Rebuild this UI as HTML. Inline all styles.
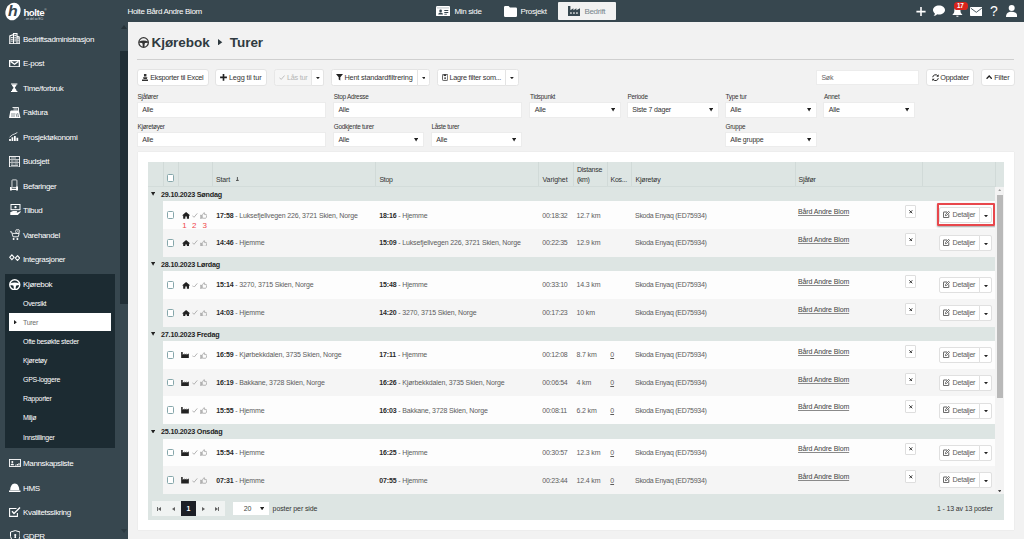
<!DOCTYPE html><html lang="no"><head><meta charset="utf-8"><title>Kjørebok - Turer</title><style>
*{box-sizing:border-box;margin:0;padding:0}
html,body{width:1024px;height:539px;overflow:hidden;background:#f2f2f2;font-family:"Liberation Sans",sans-serif;color:#333}
.abs{position:absolute}
.t{position:absolute;white-space:nowrap;line-height:1}
#top{position:absolute;left:0;top:0;width:1024px;height:22px;background:#37474f}
#side{position:absolute;left:0;top:22px;width:128px;height:517px;background:#37474f;overflow:hidden}
.si{position:absolute;left:23px;color:#fff;font-size:8px;letter-spacing:-0.35px;white-space:nowrap;line-height:10px;height:10px}
.ss{position:absolute;left:23px;color:#fff;font-size:7px;letter-spacing:-0.3px;white-space:nowrap;line-height:10px;height:10px}
.btn{position:absolute;top:68.7px;height:17px;background:#fff;border:1px solid #e4e4e4;border-radius:3px;font-size:7.3px;line-height:16.6px;padding-left:0.6px;white-space:nowrap;color:#333}
.btn svg{margin:0.7px 0 0 0.6px}
.lbl{position:absolute;font-size:6.4px;letter-spacing:-0.26px;line-height:8px;white-space:nowrap;color:#333}
.inp{position:absolute;height:15.6px;background:#fff;border:1px solid #ececec;font-size:7px;letter-spacing:-0.19px;line-height:14.4px;padding-left:4.4px;margin:-0.5px 0 0 -0.7px;white-space:nowrap;color:#333}
.inp .car{position:absolute;right:4.6px;top:5.4px;width:4.2px;height:3.4px}
#panel{position:absolute;left:138px;top:151.8px;width:875.7px;height:378.4px;background:#fff;box-shadow:0 0 0.8px rgba(0,0,0,.18)}
#tbl{position:absolute;left:148px;top:161.8px;width:856px;height:358.2px;background:#dde5e3}
.th{position:absolute;font-size:7px;letter-spacing:-0.25px;line-height:9px;white-space:nowrap;color:#333}
.vd{position:absolute;top:0;width:1px;height:25px;background:#d1dad8}
  .grp{position:absolute;left:0;width:847px;height:14.5px;background:#dde5e3;font-size:7.2px;font-weight:bold;letter-spacing:-0.2px;line-height:15.1px;white-space:nowrap;color:#222}
.row{position:absolute;left:15px;width:832px;height:27.8px;font-size:7px;letter-spacing:-0.14px;white-space:nowrap;color:#5c5c5c}
.row .c{position:absolute;top:9.35px;line-height:9px}
.row b{color:#2a2a2a;letter-spacing:-0.15px}
.cb{position:absolute;width:7.2px;height:7.8px;border:1.1px solid #86a7ab;background:#fff;border-radius:1.5px}
.xb{position:absolute;width:10.8px;height:12.6px;border:1px solid #dedede;background:#fff;border-radius:1px}
.db{position:absolute;height:16px;background:#fff;border:1px solid #e0e0e0;border-radius:2px;font-size:7.2px;letter-spacing:-0.25px;line-height:14.2px}
</style></head><body>
<div id="top">
<svg class="abs" style="left:3.5px;top:2px" width="18" height="19" viewBox="0 0 18 19"><ellipse cx="9" cy="9.5" rx="7.3" ry="9" transform="rotate(24 9 9.5)" fill="#fff"/></svg>
<div class="t" style="left:8px;top:3.3px;font-size:15.5px;font-weight:bold;font-style:italic;color:#37474f;transform:scaleX(1.02);transform-origin:left top">h</div>
<div class="t" style="left:23.4px;top:8.1px;font-size:9.7px;font-weight:bold;color:#fff;letter-spacing:-0.45px">holte</div>
<div class="t" style="left:44.2px;top:8.6px;font-size:3.2px;color:#cfd8dc">®</div>
<div class="t" style="left:24.2px;top:17.7px;font-size:2.9px;color:#cfd8dc;letter-spacing:0">- en del av ECi</div>
<div class="t" style="left:127.5px;top:8.4px;font-size:8px;color:#fff;letter-spacing:-0.33px">Holte Bård Andre Blom</div>
<svg class="abs" style="left:435.8px;top:5.6px" width="14.2" height="10.4" viewBox="0 0 14.2 10.4"><rect x="0" y="0" width="14.2" height="10.4" rx="1.4" fill="#fff"/><rect x="1" y="1.6" width="12.2" height="0.7" fill="#9aa5aa"/><circle cx="4.6" cy="4.9" r="1.35" fill="#37474f"/><path d="M2.2 8.4Q2.2 6.5 4.6 6.5Q7 6.5 7 8.4Z" fill="#37474f"/><rect x="8.3" y="4" width="4" height="1" fill="#37474f"/><rect x="8.3" y="6" width="4" height="1" fill="#37474f"/><rect x="8.3" y="7.8" width="2.6" height="0.8" fill="#37474f"/></svg>
<div class="t" style="left:454.5px;top:8px;font-size:8px;color:#fff;letter-spacing:-0.35px">Min side</div>
<svg class="abs" style="left:503.7px;top:5.5px" width="13" height="11" viewBox="0 0 13 11"><path d="M0 1.2 Q0 0 1.2 0 L4.6 0 L6 1.6 L11.8 1.6 Q13 1.6 13 2.8 L13 9.8 Q13 11 11.8 11 L1.2 11 Q0 11 0 9.8Z" fill="#fff"/></svg>
<div class="t" style="left:520.5px;top:8px;font-size:8px;color:#fff;letter-spacing:-0.35px">Prosjekt</div>
<div class="abs" style="left:558px;top:2px;width:58.3px;height:18px;background:#f2f2f2;border-radius:1px"></div>
<svg class="abs" style="left:568px;top:6px" width="12" height="10" viewBox="0 0 12 10"><path d="M0 0 L2.4 0 L2.4 4.2 L5.4 2.2 L5.4 4.2 L8.4 2.2 L8.4 4.2 L12 2.2 L12 10 L0 10Z" fill="#37474f"/><rect x="2.2" y="6.3" width="1.5" height="1.5" fill="#f2f2f2"/><rect x="5.2" y="6.3" width="1.5" height="1.5" fill="#f2f2f2"/><rect x="8.2" y="6.3" width="1.5" height="1.5" fill="#f2f2f2"/></svg>
<div class="t" style="left:584.5px;top:8px;font-size:8px;color:#78868c;letter-spacing:-0.35px">Bedrift</div>
<svg class="abs" style="left:916px;top:6.6px" width="10" height="9.2" viewBox="0 0 10 10"><path d="M4.15 0h1.7v4.1H10v1.8H5.85V10H4.15V5.9H0V4.1h4.15z" fill="#fff"/></svg>
<svg class="abs" style="left:933px;top:5.2px" width="12" height="12" viewBox="0 0 12 12"><path d="M6 0.5 C9.3 0.5 12 2.5 12 5 C12 7.5 9.3 9.5 6 9.5 C5.3 9.5 4.7 9.4 4.1 9.3 C3.2 10.2 2 10.9 0.6 11 C1.3 10.3 1.8 9.4 1.9 8.4 C0.7 7.5 0 6.3 0 5 C0 2.5 2.7 0.5 6 0.5Z" fill="#fff"/></svg>
<svg class="abs" style="left:952.2px;top:5.8px" width="10.8" height="11.4" viewBox="0 0 11 13"><path d="M5.5 0.5 C7.8 0.5 9 2.5 9 5 C9 7.5 9.8 8.6 11 9.6 L11 10.4 L0 10.4 L0 9.6 C1.2 8.6 2 7.5 2 5 C2 2.5 3.2 0.5 5.5 0.5Z M4.2 11 L6.8 11 C6.8 11.9 6.2 12.4 5.5 12.4 C4.8 12.4 4.2 11.9 4.2 11Z" fill="#fff"/></svg>
<div class="abs" style="left:953.7px;top:2.4px;width:14.4px;height:7.2px;border-radius:3.6px;background:#d9241c"></div>
<div class="t" style="left:957px;top:3px;font-size:6.3px;font-weight:bold;color:#fff;letter-spacing:-0.2px">17</div>
<svg class="abs" style="left:969.7px;top:6.7px" width="12.6" height="9" viewBox="0 0 12.6 9"><rect width="12.6" height="9" rx="0.8" fill="#fff"/><path d="M0.8 1.2 L6.3 5.3 L11.8 1.2" fill="none" stroke="#37474f" stroke-width="0.9"/></svg>
<div class="t" style="left:990px;top:3.8px;font-size:14px;color:#fff">?</div>
<svg class="abs" style="left:1006px;top:5px" width="11.4" height="12" viewBox="0 0 11.4 12"><circle cx="5.7" cy="3" r="3" fill="#fff"/><path d="M0 12 C0 8.5 2 6.8 5.7 6.8 C9.4 6.8 11.4 8.5 11.4 12Z" fill="#fff"/></svg>
</div>
<div id="side">
<div class="abs" style="left:120px;top:29px;width:8px;height:253px;background:#212f36"></div>
<div class="abs" style="left:120.5px;top:2.5px;width:0;height:0;border-left:3.5px solid transparent;border-right:3.5px solid transparent;border-bottom:4px solid #263238"></div>
<div class="abs" style="left:120.5px;top:507px;width:0;height:0;border-left:3.5px solid transparent;border-right:3.5px solid transparent;border-top:4px solid #2c3a41"></div>
<div class="abs" style="left:5px;top:251.7px;width:109.5px;height:174px;background:#1c2b32"></div>
<div class="abs" style="left:8.8px;top:291.3px;width:102px;height:17.4px;background:#fff"></div>
<svg class="abs" style="left:13.8px;top:297.8px" width="2.8" height="4.6" viewBox="0 0 2.8 4.6"><polygon points="0,0 2.8,2.3 0,4.6" fill="#222"/></svg>
<svg class="abs" style="left:9px;top:11px" width="11" height="11" viewBox="0 0 11 11"><path d="M0.8 10.5V3L4.5 1.6V10.5M4.5 10.5V0.6H8V10.5M8 3.2L10.2 4V10.5" fill="none" stroke="#fff" stroke-width="1.1"/><path d="M0 10.6H11" stroke="#fff" stroke-width="0.9"/><path d="M1.8 4.5h2M1.8 6.3h2M1.8 8.1h2M5.3 2.5h2M5.3 4.3h2M5.3 6.1h2M5.3 7.9h2M8.6 5.5h1M8.6 7.3h1" stroke="#fff" stroke-width="0.9"/></svg>
<div class="si" style="top:12.6px">Bedriftsadministrasjon</div>
<svg class="abs" style="left:9px;top:37.5px" width="11" height="7.5" viewBox="0 0 11 7.5"><rect x="0.65" y="0.65" width="9.7" height="6.2" fill="none" stroke="#fff" stroke-width="1.3"/><path d="M1.6 1.4L5.5 4.2L9.4 1.4" fill="none" stroke="#fff" stroke-width="1.3"/></svg>
<div class="si" style="top:37.1px">E-post</div>
<svg class="abs" style="left:11.4px;top:60.7px" width="6.4" height="9.6" viewBox="0 0 7.5 10"><path d="M0 0h7.5v1.2H0zM0 8.8h7.5V10H0z" fill="#fff"/><path d="M1 1.2H6.5C6.5 3.4 4.5 4.2 4.5 5C4.5 5.8 6.5 6.6 6.5 8.8H1C1 6.6 3 5.8 3 5C3 4.2 1 3.4 1 1.2Z" fill="#fff"/></svg>
<div class="si" style="top:61.6px">Time/forbruk</div>
<svg class="abs" style="left:9px;top:84.5px" width="11.5" height="11" viewBox="0 0 11.5 11"><path d="M3.5 0.5H9.5V4" fill="none" stroke="#fff" stroke-width="0.9"/><path d="M0 11L1.2 4.5Q1.4 3.6 2.3 3.6H9Q9.9 3.6 10.1 4.5L11.5 11Z" fill="#fff"/><path d="M4.5 1.8h4M4.5 3h4" stroke="#fff" stroke-width="0.6"/><path d="M3 6v4M5 6v4M7 6.5l1 3.5M8.6 6l1 4" stroke="#37474f" stroke-width="0.6"/></svg>
<div class="si" style="top:86.1px">Faktura</div>
<svg class="abs" style="left:9.3px;top:109.6px" width="9.4" height="9.6" viewBox="0 0 10.5 11"><path d="M0 11V8h2v3zM2.8 11V6h2v5zM5.6 11V4.5h2V11zM8.4 11V6.5h2V11z" fill="#fff"/><path d="M0.5 6L3.8 3.2L6.5 2.2L9.5 0.5" fill="none" stroke="#fff" stroke-width="0.9"/></svg>
<div class="si" style="top:110.6px">Prosjektøkonomi</div>
<svg class="abs" style="left:9px;top:133.5px" width="11" height="11.5" viewBox="0 0 11 11.5"><rect x="0.5" y="0.5" width="10" height="10.5" fill="none" stroke="#fff" stroke-width="0.9"/><path d="M0.5 3.6h10M0.5 6.4h10M2 2h5M2 5h2.5M5.5 5h3.5M2 8h2.5M5.5 8h3.5M2 9.5h7" stroke="#fff" stroke-width="0.7"/></svg>
<div class="si" style="top:135.1px">Budsjett</div>
<svg class="abs" style="left:10.3px;top:156.7px" width="8" height="12" viewBox="0 0 9 12.5"><rect x="2.2" y="0.5" width="5.6" height="8.5" rx="0.8" fill="none" stroke="#fff" stroke-width="0.9"/><path d="M0 8.5h2v4H0zM2 10.5h5.5V12H2zM6.8 8h2.2v4.5H6.8z" fill="#fff"/></svg>
<div class="si" style="top:159.6px">Befaringer</div>
<svg class="abs" style="left:9.5px;top:182.0px" width="11" height="12" viewBox="0 0 11 12"><rect x="1" y="0.5" width="9" height="5.2" fill="none" stroke="#fff" stroke-width="1"/><circle cx="5.5" cy="3.1" r="1.2" fill="#fff"/><path d="M0.3 8.2L3 7h3.5q1 0.2 0.4 1.2H5l2.8 0.2L10.3 7.2q0.9 0 0.4 0.9L7.8 11H0.3z" fill="#fff"/></svg>
<div class="si" style="top:184.1px">Tilbud</div>
<svg class="abs" style="left:9.5px;top:206.5px" width="11" height="12" viewBox="0 0 11 12"><path d="M0 2.8h1.6l1.4 5h5.2l1-3.4H2.4" fill="none" stroke="#fff" stroke-width="0.9"/><circle cx="3.6" cy="10" r="1" fill="#fff"/><circle cx="7.4" cy="10" r="1" fill="#fff"/><circle cx="7.6" cy="2.4" r="2" fill="none" stroke="#fff" stroke-width="0.8"/><path d="M7.6 1.3v1.3h1" stroke="#fff" stroke-width="0.6" fill="none"/></svg>
<div class="si" style="top:208.6px">Varehandel</div>
<svg class="abs" style="left:9px;top:231.9px" width="11.4" height="7.4" viewBox="0 0 11.4 7.4"><path d="M2.9 0.9L5.1 3.3L2.9 5.7L0.7 3.3Z" fill="none" stroke="#fff" stroke-width="1.1"/><path d="M8.5 1.7L10.7 4.1L8.5 6.5L6.3 4.1Z" fill="none" stroke="#fff" stroke-width="1.1"/></svg>
<div class="si" style="top:233.1px">Integrasjoner</div>
<svg class="abs" style="left:9px;top:256.5px" width="11.5" height="11.5" viewBox="0 0 11.5 11.5"><circle cx="5.75" cy="5.75" r="5" fill="none" stroke="#fff" stroke-width="1.4"/><path d="M1 4.6Q5.75 2.6 10.5 4.6L10.4 6L7.2 6.4Q6.6 7.6 6.7 10.4H4.8Q4.9 7.6 4.3 6.4L1.1 6Z" fill="#fff"/></svg>
<div class="si" style="top:258.1px">Kjørebok</div>
<svg class="abs" style="left:9px;top:437.0px" width="12" height="8" viewBox="0 0 12 8"><rect x="0.5" y="0.5" width="11" height="7" fill="none" stroke="#fff" stroke-width="0.9"/><circle cx="3.3" cy="3" r="1" fill="#fff"/><path d="M1.6 6.2Q1.6 4.4 3.3 4.4Q5 4.4 5 6.2Z" fill="#fff"/><path d="M6 5.8h1.4v0.8H6zM7.8 5h1.2v1.6H7.8zM9.4 4.2h1.2v2.4H9.4z" fill="#fff"/></svg>
<div class="si" style="top:437.1px">Mannskapsliste</div>
<svg class="abs" style="left:9px;top:460.5px" width="11.5" height="9.5" viewBox="0 0 11.5 9.5"><path d="M1.2 7.2C1.2 3.5 3 0.6 5.75 0.6C8.5 0.6 10.3 3.5 10.3 7.2Z" fill="#fff"/><path d="M0 7.4h11.5v1.6Q5.75 9.8 0 9z" fill="#fff"/></svg>
<div class="si" style="top:461.6px">HMS</div>
<svg class="abs" style="left:9px;top:485.0px" width="12" height="10" viewBox="0 0 12 10"><path d="M7.5 1.5H0.6V9.4H8.4V6" fill="none" stroke="#fff" stroke-width="1.1"/><path d="M3 4.2L5 6.4L11 0.6" fill="none" stroke="#fff" stroke-width="1.4"/></svg>
<div class="si" style="top:486.1px">Kvalitetssikring</div>
<svg class="abs" style="left:9.5px;top:508.0px" width="10.5" height="12" viewBox="0 0 10.5 12"><path d="M5.25 0.6L10 2v4.5Q10 10 5.25 11.6Q0.5 10 0.5 6.5V2Z" fill="none" stroke="#fff" stroke-width="1"/><circle cx="5.25" cy="5" r="1.1" fill="#fff"/><path d="M4.7 5.5h1.1l0.4 2.6H4.3z" fill="#fff"/></svg>
<div class="si" style="top:510.1px">GDPR</div>
<div class="ss" style="top:277.0px;color:#fff">Oversikt</div>
<div class="ss" style="top:296.0px;color:#6e6e6e">Turer</div>
<div class="ss" style="top:315.0px;color:#fff">Ofte besøkte steder</div>
<div class="ss" style="top:334.0px;color:#fff">Kjøretøy</div>
<div class="ss" style="top:353.0px;color:#fff">GPS-loggere</div>
<div class="ss" style="top:372.0px;color:#fff">Rapporter</div>
<div class="ss" style="top:391.3px;color:#fff">Miljø</div>
<div class="ss" style="top:410.5px;color:#fff">Innstillinger</div>
</div>
<svg class="abs" style="left:137.6px;top:36.6px" width="11.2" height="11" viewBox="0 0 11.5 11.5"><circle cx="5.75" cy="5.75" r="5" fill="none" stroke="#333" stroke-width="1.3"/><path d="M1 4.6Q5.75 2.6 10.5 4.6L10.4 6L7.2 6.4Q6.6 7.6 6.7 10.4H4.8Q4.9 7.6 4.3 6.4L1.1 6Z" fill="#333"/></svg>
<div class="t" style="left:151.5px;top:35.5px;font-size:13.5px;font-weight:bold;color:#2f3a40;letter-spacing:-0.05px">Kjørebok</div>
<svg class="abs" style="left:218.4px;top:38.8px" width="4.3" height="6.4" viewBox="0 0 4.3 6.4"><polygon points="0,0 4.3,3.2 0,6.4" fill="#2f3a40"/></svg>
<div class="t" style="left:229.8px;top:35.5px;font-size:13.5px;font-weight:bold;color:#2f3a40;letter-spacing:-0.05px">Turer</div>
<div class="abs" style="left:137px;top:59px;width:877px;height:1px;background:#cfcfcf"></div>
<div class="btn" style="left:136.8px;width:71.8px;"><svg class="abs" style="left:3.6px;top:3.2px" width="6.4" height="7.4" viewBox="0 0 6.5 7.5"><path d="M2 0h2.5v2.6H2zM1 3.2h4.5l-0.6 2H1.6zM0 5.6h6.5v1.9H0z" fill="#333"/></svg><span style="position:absolute;left:12.4px;top:0;letter-spacing:-0.269px">Eksporter til Excel</span></div>
<div class="btn" style="left:215.3px;width:51.7px;"><svg class="abs" style="left:3px;top:3.6px" width="7" height="6.8" viewBox="0 0 10 10"><path d="M3.8 0h2.4v3.8H10v2.4H6.2V10H3.8V6.2H0V3.8h3.8z" fill="#222"/></svg><span style="position:absolute;left:12.6px;top:0;letter-spacing:-0.124px">Legg til tur</span></div>
<div class="btn" style="left:273.8px;width:38.7px;background:#f6f6f6;border-color:#e7e7e7;border-radius:2.5px 0 0 2.5px"><svg class="abs" style="left:3.6px;top:4.2px" width="6" height="5" viewBox="0 0 6 5"><path d="M0.4 2.6L2.2 4.4L5.6 0.5" fill="none" stroke="#b0b0b0" stroke-width="0.8"/></svg><span style="position:absolute;left:12.3px;top:0;letter-spacing:-0.302px;color:#b5b5b5">Lås tur</span></div>
<div class="btn" style="left:310.8px;width:13.4px;border-radius:0 2.5px 2.5px 0;border-left-color:#e7e7e7"><svg class="abs" style="left:3.6px;top:6.4px" width="3.8" height="2.2" viewBox="0 0 3.8 2.2"><polygon points="0,0 3.8,0 1.9,2.2" fill="#222"/></svg></div>
<div class="btn" style="left:331.0px;width:87.2px;border-radius:2.5px 0 0 2.5px"><svg class="abs" style="left:3.4px;top:3.7px" width="7" height="6.6" viewBox="0 0 7 6.6"><path d="M0 0h7L4.3 3.2V6.6L2.7 5.6V3.2Z" fill="#222"/></svg><span style="position:absolute;left:12.4px;top:0;letter-spacing:-0.157px">Hent standardfiltrering</span></div>
<div class="btn" style="left:416.5px;width:13.5px;border-radius:0 2.5px 2.5px 0"><svg class="abs" style="left:3.6px;top:6.4px" width="3.8" height="2.2" viewBox="0 0 3.8 2.2"><polygon points="0,0 3.8,0 1.9,2.2" fill="#222"/></svg></div>
<div class="btn" style="left:437.2px;width:69.2px;border-radius:2.5px 0 0 2.5px"><svg class="abs" style="left:3.2px;top:3.4px" width="6.2" height="6.8" viewBox="0 0 6 6.6"><rect x="0.4" y="0.4" width="5.2" height="5.8" rx="0.8" fill="none" stroke="#333" stroke-width="0.8"/><rect x="1.6" y="0.4" width="2.4" height="1.6" fill="#333"/><circle cx="3" cy="4" r="0.9" fill="#333"/></svg><span style="position:absolute;left:11.2px;top:0;letter-spacing:-0.242px">Lagre filter som...</span></div>
<div class="btn" style="left:504.7px;width:14.0px;border-radius:0 2.5px 2.5px 0"><svg class="abs" style="left:3.6px;top:6.4px" width="3.8" height="2.2" viewBox="0 0 3.8 2.2"><polygon points="0,0 3.8,0 1.9,2.2" fill="#222"/></svg></div>
<div class="inp" style="left:816.7px;top:70.4px;width:102.6px;color:#666">Søk</div>
<div class="btn" style="left:926.2px;width:48.0px;"><svg class="abs" style="left:4px;top:3.3px" width="7" height="7.4" viewBox="0 0 7 7.4"><path d="M0.7 3.2A2.9 2.9 0 0 1 5.8 1.8" fill="none" stroke="#222" stroke-width="1"/><path d="M6.7 0.3V2.7H4.4Z" fill="#222"/><path d="M6.3 4.2A2.9 2.9 0 0 1 1.2 5.6" fill="none" stroke="#222" stroke-width="1"/><path d="M0.3 7.1V4.7H2.6Z" fill="#222"/></svg><span style="position:absolute;left:13px;top:0;letter-spacing:-0.205px">Oppdater</span></div>
<div class="btn" style="left:980.5px;width:34.0px;"><svg class="abs" style="left:4px;top:4.6px" width="6.4" height="4.4" viewBox="0 0 6.4 4.4"><path d="M0.6 3.8L3.2 1L5.8 3.8" fill="none" stroke="#222" stroke-width="1.3"/></svg><span style="position:absolute;left:12.8px;top:0;letter-spacing:-0.17px">Filter</span></div>
<div class="lbl" style="left:137.5px;top:93.0px">Sjåfører</div>
<div class="inp" style="left:137.5px;top:102.5px;width:188.7px">Alle</div>
<div class="lbl" style="left:333.7px;top:93.0px">Stop Adresse</div>
<div class="inp" style="left:333.7px;top:102.5px;width:189.0px">Alle</div>
<div class="lbl" style="left:530px;top:93.0px">Tidspunkt</div>
<div class="inp" style="left:530px;top:102.5px;width:91.2px">Alle<svg class="car" viewBox="0 0 4.2 3.4"><polygon points="0,0 4.2,0 2.1,3.4" fill="#222"/></svg></div>
<div class="lbl" style="left:627.5px;top:93.0px">Periode</div>
<div class="inp" style="left:627.5px;top:102.5px;width:91.7px">Siste 7 dager<svg class="car" viewBox="0 0 4.2 3.4"><polygon points="0,0 4.2,0 2.1,3.4" fill="#222"/></svg></div>
<div class="lbl" style="left:725.5px;top:93.0px">Type tur</div>
<div class="inp" style="left:725.5px;top:102.5px;width:91.7px">Alle<svg class="car" viewBox="0 0 4.2 3.4"><polygon points="0,0 4.2,0 2.1,3.4" fill="#222"/></svg></div>
<div class="lbl" style="left:824px;top:93.0px">Annet</div>
<div class="inp" style="left:824px;top:102.5px;width:91.7px">Alle<svg class="car" viewBox="0 0 4.2 3.4"><polygon points="0,0 4.2,0 2.1,3.4" fill="#222"/></svg></div>
<div class="lbl" style="left:137.5px;top:122.80000000000001px">Kjøretøyer</div>
<div class="inp" style="left:137.5px;top:132.3px;width:188.7px">Alle</div>
<div class="lbl" style="left:333.7px;top:122.80000000000001px">Godkjente turer</div>
<div class="inp" style="left:333.7px;top:132.3px;width:91.0px">Alle<svg class="car" viewBox="0 0 4.2 3.4"><polygon points="0,0 4.2,0 2.1,3.4" fill="#222"/></svg></div>
<div class="lbl" style="left:431.5px;top:122.80000000000001px">Låste turer</div>
<div class="inp" style="left:431.5px;top:132.3px;width:91.2px">Alle<svg class="car" viewBox="0 0 4.2 3.4"><polygon points="0,0 4.2,0 2.1,3.4" fill="#222"/></svg></div>
<div class="lbl" style="left:725.5px;top:122.80000000000001px">Gruppe</div>
<div class="inp" style="left:725.5px;top:132.3px;width:91.7px">Alle gruppe<svg class="car" viewBox="0 0 4.2 3.4"><polygon points="0,0 4.2,0 2.1,3.4" fill="#222"/></svg></div>
<div id="panel"></div>
<div id="tbl">
<div class="vd" style="left:15px"></div>
<div class="vd" style="left:30px"></div>
<div class="vd" style="left:64.19999999999999px"></div>
<div class="vd" style="left:227.3px"></div>
<div class="vd" style="left:389.79999999999995px"></div>
<div class="vd" style="left:425px"></div>
<div class="vd" style="left:459px"></div>
<div class="vd" style="left:483px"></div>
<div class="vd" style="left:646.7px"></div>
<div class="vd" style="left:774.2px"></div>
<div class="vd" style="left:847px"></div>
<div class="abs" style="left:0;top:24.6px;width:847px;height:1px;background:#d3dcda"></div>
<div class="cb" style="left:19px;top:12.6px"></div>
<div class="th" style="left:68px;top:13px;letter-spacing:-0.157px">Start</div>
<svg class="abs" style="left:88.2px;top:14.8px" width="2.8" height="4.8" viewBox="0 0 2.8 4.8"><path d="M1.4 0V4.3M0 2.8L1.4 4.5L2.8 2.8" fill="none" stroke="#333" stroke-width="0.8"/></svg>
<div class="th" style="left:231.5px;top:13px;letter-spacing:-0.35px">Stop</div>
<div class="th" style="left:394.5px;top:13px;letter-spacing:-0.069px">Varighet</div>
<div class="th" style="left:429px;top:3.5px;letter-spacing:-0.279px">Distanse</div>
<div class="th" style="left:429px;top:13px;letter-spacing:-0.373px">(km)</div>
<div class="th" style="left:462.5px;top:13px;letter-spacing:-0.233px">Kos...</div>
<div class="th" style="left:487.5px;top:13px;letter-spacing:-0.181px">Kjøretøy</div>
<div class="th" style="left:650.5px;top:13px;letter-spacing:-0.278px">Sjåfør</div>
<div class="grp" style="top:25.00px"><svg class="abs" style="left:3.3px;top:5.5px" width="4.2" height="3.7" viewBox="0 0 4.2 3.7"><polygon points="0,0 4.2,0 2.1,3.7" fill="#222"/></svg><span style="position:absolute;left:13px;top:0">29.10.2023 Søndag</span></div>
<div class="row" style="top:39.45px;background:#fdfdfd">
<div class="cb" style="left:3.7px;top:9.9px"></div>
<svg class="abs" style="left:18.6px;top:10.7px" width="8.2" height="6.8" viewBox="0 0 8.4 7"><path d="M4.2 0L8.4 3.6H7.2V7H5V4.6H3.4V7H1.2V3.6H0Z" fill="#222"/></svg>
<svg class="abs" style="left:29px;top:11.5px" width="5.6" height="4.8" viewBox="0 0 5.6 4.8"><path d="M0.3 2.6L2 4.3L5.3 0.4" fill="none" stroke="#ababab" stroke-width="0.9"/></svg>
<svg class="abs" style="left:36.8px;top:10.7px" width="7.2" height="6.8" viewBox="0 0 7.2 6.8"><path d="M0.3 3.2h1.2v3.2H0.3zM2.3 6.2V3.2L4 0.5Q5 0.6 4.6 2.6H6.4Q7 2.8 6.8 3.6L6.2 5.8Q6 6.3 5.4 6.3Z" fill="none" stroke="#999" stroke-width="0.7"/></svg>
<div class="c" style="left:53.3px"><b>17:58</b> - Luksefjellvegen 226, 3721 Skien, Norge</div>
<div class="c" style="left:216.3px"><b>18:16</b> - Hjemme</div>
<div class="c" style="left:379.3px;letter-spacing:-0.26px">00:18:32</div>
<div class="c" style="left:413.5px">12.7 km</div>
<div class="c" style="left:472px;letter-spacing:-0.28px">Skoda Enyaq (ED75934)</div>
<div class="c" style="left:635px;top:5.8px;text-decoration:underline;text-decoration-color:#8a8a8a;text-underline-offset:0.6px;letter-spacing:-0.12px;color:#444">Bård Andre Blom</div>
<div class="xb" style="left:742px;top:4px"><svg class="abs" style="left:3.2px;top:3.8px" width="3.6" height="3.6" viewBox="0 0 3.6 3.6"><path d="M0.3 0.3L3.3 3.3M3.3 0.3L0.3 3.3" stroke="#222" stroke-width="0.9"/></svg></div>
<div class="db" style="left:775.5px;top:6.1px;width:41.2px;border-radius:2px 0 0 2px"><svg class="abs" style="left:3.8px;top:2.9px" width="7" height="7" viewBox="0 0 7 7"><path d="M4 1H0.8Q0.4 1 0.4 1.4V6.2Q0.4 6.6 0.8 6.6H5.4Q5.8 6.6 5.8 6.2V3.4" fill="none" stroke="#333" stroke-width="0.8"/><path d="M2.6 3.4L5.6 0.4L6.6 1.4L3.6 4.4L2.4 4.7Z" fill="none" stroke="#333" stroke-width="0.7"/></svg><span style="position:absolute;left:13px;top:0">Detaljer</span></div>
<div class="db" style="left:815.9px;top:6.1px;width:13.2px;border-radius:0 2px 2px 0"><svg class="abs" style="left:3.8px;top:6.6px" width="4" height="2.3" viewBox="0 0 4.2 2.4"><polygon points="0,0 4.2,0 2.1,2.4" fill="#222"/></svg></div>
<div class="abs" style="left:774px;top:1.6px;width:58.2px;height:23px;border:2px solid #e8474c;border-radius:1px;box-shadow:0.5px 1px 2px rgba(0,0,0,.35)"></div>
<div class="abs" style="left:19.3px;top:20.6px;font-size:8px;line-height:8px;color:#f0474b;letter-spacing:0">1</div>
<div class="abs" style="left:29px;top:20.6px;font-size:8px;line-height:8px;color:#f0474b;letter-spacing:0">2</div>
<div class="abs" style="left:39.4px;top:20.6px;font-size:8px;line-height:8px;color:#f0474b;letter-spacing:0">3</div>
</div>
<div class="row" style="top:67.17px;background:#f5f5f5">
<div class="cb" style="left:3.7px;top:9.9px"></div>
<svg class="abs" style="left:18.6px;top:10.7px" width="8.2" height="6.8" viewBox="0 0 8.4 7"><path d="M4.2 0L8.4 3.6H7.2V7H5V4.6H3.4V7H1.2V3.6H0Z" fill="#222"/></svg>
<svg class="abs" style="left:29px;top:11.5px" width="5.6" height="4.8" viewBox="0 0 5.6 4.8"><path d="M0.3 2.6L2 4.3L5.3 0.4" fill="none" stroke="#ababab" stroke-width="0.9"/></svg>
<svg class="abs" style="left:36.8px;top:10.7px" width="7.2" height="6.8" viewBox="0 0 7.2 6.8"><path d="M0.3 3.2h1.2v3.2H0.3zM2.3 6.2V3.2L4 0.5Q5 0.6 4.6 2.6H6.4Q7 2.8 6.8 3.6L6.2 5.8Q6 6.3 5.4 6.3Z" fill="none" stroke="#999" stroke-width="0.7"/></svg>
<div class="c" style="left:53.3px"><b>14:46</b> - Hjemme</div>
<div class="c" style="left:216.3px"><b>15:09</b> - Luksefjellvegen 226, 3721 Skien, Norge</div>
<div class="c" style="left:379.3px;letter-spacing:-0.26px">00:22:35</div>
<div class="c" style="left:413.5px">12.9 km</div>
<div class="c" style="left:472px;letter-spacing:-0.28px">Skoda Enyaq (ED75934)</div>
<div class="c" style="left:635px;top:5.8px;text-decoration:underline;text-decoration-color:#8a8a8a;text-underline-offset:0.6px;letter-spacing:-0.12px;color:#444">Bård Andre Blom</div>
<div class="xb" style="left:742px;top:4px"><svg class="abs" style="left:3.2px;top:3.8px" width="3.6" height="3.6" viewBox="0 0 3.6 3.6"><path d="M0.3 0.3L3.3 3.3M3.3 0.3L0.3 3.3" stroke="#222" stroke-width="0.9"/></svg></div>
<div class="db" style="left:775.5px;top:6.1px;width:41.2px;border-radius:2px 0 0 2px"><svg class="abs" style="left:3.8px;top:2.9px" width="7" height="7" viewBox="0 0 7 7"><path d="M4 1H0.8Q0.4 1 0.4 1.4V6.2Q0.4 6.6 0.8 6.6H5.4Q5.8 6.6 5.8 6.2V3.4" fill="none" stroke="#333" stroke-width="0.8"/><path d="M2.6 3.4L5.6 0.4L6.6 1.4L3.6 4.4L2.4 4.7Z" fill="none" stroke="#333" stroke-width="0.7"/></svg><span style="position:absolute;left:13px;top:0">Detaljer</span></div>
<div class="db" style="left:815.9px;top:6.1px;width:13.2px;border-radius:0 2px 2px 0"><svg class="abs" style="left:3.8px;top:6.6px" width="4" height="2.3" viewBox="0 0 4.2 2.4"><polygon points="0,0 4.2,0 2.1,2.4" fill="#222"/></svg></div>
</div>
<div class="grp" style="top:94.89px"><svg class="abs" style="left:3.3px;top:5.5px" width="4.2" height="3.7" viewBox="0 0 4.2 3.7"><polygon points="0,0 4.2,0 2.1,3.7" fill="#222"/></svg><span style="position:absolute;left:13px;top:0">28.10.2023 Lørdag</span></div>
<div class="row" style="top:109.34px;background:#fdfdfd">
<div class="cb" style="left:3.7px;top:9.9px"></div>
<svg class="abs" style="left:18.6px;top:10.7px" width="8.2" height="6.8" viewBox="0 0 8.4 7"><path d="M4.2 0L8.4 3.6H7.2V7H5V4.6H3.4V7H1.2V3.6H0Z" fill="#222"/></svg>
<svg class="abs" style="left:29px;top:11.5px" width="5.6" height="4.8" viewBox="0 0 5.6 4.8"><path d="M0.3 2.6L2 4.3L5.3 0.4" fill="none" stroke="#ababab" stroke-width="0.9"/></svg>
<svg class="abs" style="left:36.8px;top:10.7px" width="7.2" height="6.8" viewBox="0 0 7.2 6.8"><path d="M0.3 3.2h1.2v3.2H0.3zM2.3 6.2V3.2L4 0.5Q5 0.6 4.6 2.6H6.4Q7 2.8 6.8 3.6L6.2 5.8Q6 6.3 5.4 6.3Z" fill="none" stroke="#999" stroke-width="0.7"/></svg>
<div class="c" style="left:53.3px"><b>15:14</b> - 3270, 3715 Skien, Norge</div>
<div class="c" style="left:216.3px"><b>15:48</b> - Hjemme</div>
<div class="c" style="left:379.3px;letter-spacing:-0.26px">00:33:10</div>
<div class="c" style="left:413.5px">14.3 km</div>
<div class="c" style="left:472px;letter-spacing:-0.28px">Skoda Enyaq (ED75934)</div>
<div class="c" style="left:635px;top:5.8px;text-decoration:underline;text-decoration-color:#8a8a8a;text-underline-offset:0.6px;letter-spacing:-0.12px;color:#444">Bård Andre Blom</div>
<div class="xb" style="left:742px;top:4px"><svg class="abs" style="left:3.2px;top:3.8px" width="3.6" height="3.6" viewBox="0 0 3.6 3.6"><path d="M0.3 0.3L3.3 3.3M3.3 0.3L0.3 3.3" stroke="#222" stroke-width="0.9"/></svg></div>
<div class="db" style="left:775.5px;top:6.1px;width:41.2px;border-radius:2px 0 0 2px"><svg class="abs" style="left:3.8px;top:2.9px" width="7" height="7" viewBox="0 0 7 7"><path d="M4 1H0.8Q0.4 1 0.4 1.4V6.2Q0.4 6.6 0.8 6.6H5.4Q5.8 6.6 5.8 6.2V3.4" fill="none" stroke="#333" stroke-width="0.8"/><path d="M2.6 3.4L5.6 0.4L6.6 1.4L3.6 4.4L2.4 4.7Z" fill="none" stroke="#333" stroke-width="0.7"/></svg><span style="position:absolute;left:13px;top:0">Detaljer</span></div>
<div class="db" style="left:815.9px;top:6.1px;width:13.2px;border-radius:0 2px 2px 0"><svg class="abs" style="left:3.8px;top:6.6px" width="4" height="2.3" viewBox="0 0 4.2 2.4"><polygon points="0,0 4.2,0 2.1,2.4" fill="#222"/></svg></div>
</div>
<div class="row" style="top:137.06px;background:#f5f5f5">
<div class="cb" style="left:3.7px;top:9.9px"></div>
<svg class="abs" style="left:18.6px;top:10.7px" width="8.2" height="6.8" viewBox="0 0 8.4 7"><path d="M4.2 0L8.4 3.6H7.2V7H5V4.6H3.4V7H1.2V3.6H0Z" fill="#222"/></svg>
<svg class="abs" style="left:29px;top:11.5px" width="5.6" height="4.8" viewBox="0 0 5.6 4.8"><path d="M0.3 2.6L2 4.3L5.3 0.4" fill="none" stroke="#ababab" stroke-width="0.9"/></svg>
<svg class="abs" style="left:36.8px;top:10.7px" width="7.2" height="6.8" viewBox="0 0 7.2 6.8"><path d="M0.3 3.2h1.2v3.2H0.3zM2.3 6.2V3.2L4 0.5Q5 0.6 4.6 2.6H6.4Q7 2.8 6.8 3.6L6.2 5.8Q6 6.3 5.4 6.3Z" fill="none" stroke="#999" stroke-width="0.7"/></svg>
<div class="c" style="left:53.3px"><b>14:03</b> - Hjemme</div>
<div class="c" style="left:216.3px"><b>14:20</b> - 3270, 3715 Skien, Norge</div>
<div class="c" style="left:379.3px;letter-spacing:-0.26px">00:17:23</div>
<div class="c" style="left:413.5px">10 km</div>
<div class="c" style="left:472px;letter-spacing:-0.28px">Skoda Enyaq (ED75934)</div>
<div class="c" style="left:635px;top:5.8px;text-decoration:underline;text-decoration-color:#8a8a8a;text-underline-offset:0.6px;letter-spacing:-0.12px;color:#444">Bård Andre Blom</div>
<div class="xb" style="left:742px;top:4px"><svg class="abs" style="left:3.2px;top:3.8px" width="3.6" height="3.6" viewBox="0 0 3.6 3.6"><path d="M0.3 0.3L3.3 3.3M3.3 0.3L0.3 3.3" stroke="#222" stroke-width="0.9"/></svg></div>
<div class="db" style="left:775.5px;top:6.1px;width:41.2px;border-radius:2px 0 0 2px"><svg class="abs" style="left:3.8px;top:2.9px" width="7" height="7" viewBox="0 0 7 7"><path d="M4 1H0.8Q0.4 1 0.4 1.4V6.2Q0.4 6.6 0.8 6.6H5.4Q5.8 6.6 5.8 6.2V3.4" fill="none" stroke="#333" stroke-width="0.8"/><path d="M2.6 3.4L5.6 0.4L6.6 1.4L3.6 4.4L2.4 4.7Z" fill="none" stroke="#333" stroke-width="0.7"/></svg><span style="position:absolute;left:13px;top:0">Detaljer</span></div>
<div class="db" style="left:815.9px;top:6.1px;width:13.2px;border-radius:0 2px 2px 0"><svg class="abs" style="left:3.8px;top:6.6px" width="4" height="2.3" viewBox="0 0 4.2 2.4"><polygon points="0,0 4.2,0 2.1,2.4" fill="#222"/></svg></div>
</div>
<div class="grp" style="top:164.78px"><svg class="abs" style="left:3.3px;top:5.5px" width="4.2" height="3.7" viewBox="0 0 4.2 3.7"><polygon points="0,0 4.2,0 2.1,3.7" fill="#222"/></svg><span style="position:absolute;left:13px;top:0">27.10.2023 Fredag</span></div>
<div class="row" style="top:179.23px;background:#fdfdfd">
<div class="cb" style="left:3.7px;top:9.9px"></div>
<svg class="abs" style="left:18.3px;top:10.9px" width="8" height="6.4" viewBox="0 0 12 10"><path d="M0 0 L2.4 0 L2.4 4.2 L5.4 2.2 L5.4 4.2 L8.4 2.2 L8.4 4.2 L12 2.2 L12 10 L0 10Z" fill="#222"/></svg>
<svg class="abs" style="left:29px;top:11.5px" width="5.6" height="4.8" viewBox="0 0 5.6 4.8"><path d="M0.3 2.6L2 4.3L5.3 0.4" fill="none" stroke="#ababab" stroke-width="0.9"/></svg>
<svg class="abs" style="left:36.8px;top:10.7px" width="7.2" height="6.8" viewBox="0 0 7.2 6.8"><path d="M0.3 3.2h1.2v3.2H0.3zM2.3 6.2V3.2L4 0.5Q5 0.6 4.6 2.6H6.4Q7 2.8 6.8 3.6L6.2 5.8Q6 6.3 5.4 6.3Z" fill="none" stroke="#999" stroke-width="0.7"/></svg>
<div class="c" style="left:53.3px"><b>16:59</b> - Kjørbekkdalen, 3735 Skien, Norge</div>
<div class="c" style="left:216.3px"><b>17:11</b> - Hjemme</div>
<div class="c" style="left:379.3px;letter-spacing:-0.26px">00:12:08</div>
<div class="c" style="left:413.5px">8.7 km</div>
<div class="c" style="left:447.3px;text-decoration:underline">0</div>
<div class="c" style="left:472px;letter-spacing:-0.28px">Skoda Enyaq (ED75934)</div>
<div class="c" style="left:635px;top:5.8px;text-decoration:underline;text-decoration-color:#8a8a8a;text-underline-offset:0.6px;letter-spacing:-0.12px;color:#444">Bård Andre Blom</div>
<div class="xb" style="left:742px;top:4px"><svg class="abs" style="left:3.2px;top:3.8px" width="3.6" height="3.6" viewBox="0 0 3.6 3.6"><path d="M0.3 0.3L3.3 3.3M3.3 0.3L0.3 3.3" stroke="#222" stroke-width="0.9"/></svg></div>
<div class="db" style="left:775.5px;top:6.1px;width:41.2px;border-radius:2px 0 0 2px"><svg class="abs" style="left:3.8px;top:2.9px" width="7" height="7" viewBox="0 0 7 7"><path d="M4 1H0.8Q0.4 1 0.4 1.4V6.2Q0.4 6.6 0.8 6.6H5.4Q5.8 6.6 5.8 6.2V3.4" fill="none" stroke="#333" stroke-width="0.8"/><path d="M2.6 3.4L5.6 0.4L6.6 1.4L3.6 4.4L2.4 4.7Z" fill="none" stroke="#333" stroke-width="0.7"/></svg><span style="position:absolute;left:13px;top:0">Detaljer</span></div>
<div class="db" style="left:815.9px;top:6.1px;width:13.2px;border-radius:0 2px 2px 0"><svg class="abs" style="left:3.8px;top:6.6px" width="4" height="2.3" viewBox="0 0 4.2 2.4"><polygon points="0,0 4.2,0 2.1,2.4" fill="#222"/></svg></div>
</div>
<div class="row" style="top:206.95px;background:#f5f5f5">
<div class="cb" style="left:3.7px;top:9.9px"></div>
<svg class="abs" style="left:18.3px;top:10.9px" width="8" height="6.4" viewBox="0 0 12 10"><path d="M0 0 L2.4 0 L2.4 4.2 L5.4 2.2 L5.4 4.2 L8.4 2.2 L8.4 4.2 L12 2.2 L12 10 L0 10Z" fill="#222"/></svg>
<svg class="abs" style="left:29px;top:11.5px" width="5.6" height="4.8" viewBox="0 0 5.6 4.8"><path d="M0.3 2.6L2 4.3L5.3 0.4" fill="none" stroke="#ababab" stroke-width="0.9"/></svg>
<svg class="abs" style="left:36.8px;top:10.7px" width="7.2" height="6.8" viewBox="0 0 7.2 6.8"><path d="M0.3 3.2h1.2v3.2H0.3zM2.3 6.2V3.2L4 0.5Q5 0.6 4.6 2.6H6.4Q7 2.8 6.8 3.6L6.2 5.8Q6 6.3 5.4 6.3Z" fill="none" stroke="#999" stroke-width="0.7"/></svg>
<div class="c" style="left:53.3px"><b>16:19</b> - Bakkane, 3728 Skien, Norge</div>
<div class="c" style="left:216.3px"><b>16:26</b> - Kjørbekkdalen, 3735 Skien, Norge</div>
<div class="c" style="left:379.3px;letter-spacing:-0.26px">00:06:54</div>
<div class="c" style="left:413.5px">4 km</div>
<div class="c" style="left:447.3px;text-decoration:underline">0</div>
<div class="c" style="left:472px;letter-spacing:-0.28px">Skoda Enyaq (ED75934)</div>
<div class="c" style="left:635px;top:5.8px;text-decoration:underline;text-decoration-color:#8a8a8a;text-underline-offset:0.6px;letter-spacing:-0.12px;color:#444">Bård Andre Blom</div>
<div class="xb" style="left:742px;top:4px"><svg class="abs" style="left:3.2px;top:3.8px" width="3.6" height="3.6" viewBox="0 0 3.6 3.6"><path d="M0.3 0.3L3.3 3.3M3.3 0.3L0.3 3.3" stroke="#222" stroke-width="0.9"/></svg></div>
<div class="db" style="left:775.5px;top:6.1px;width:41.2px;border-radius:2px 0 0 2px"><svg class="abs" style="left:3.8px;top:2.9px" width="7" height="7" viewBox="0 0 7 7"><path d="M4 1H0.8Q0.4 1 0.4 1.4V6.2Q0.4 6.6 0.8 6.6H5.4Q5.8 6.6 5.8 6.2V3.4" fill="none" stroke="#333" stroke-width="0.8"/><path d="M2.6 3.4L5.6 0.4L6.6 1.4L3.6 4.4L2.4 4.7Z" fill="none" stroke="#333" stroke-width="0.7"/></svg><span style="position:absolute;left:13px;top:0">Detaljer</span></div>
<div class="db" style="left:815.9px;top:6.1px;width:13.2px;border-radius:0 2px 2px 0"><svg class="abs" style="left:3.8px;top:6.6px" width="4" height="2.3" viewBox="0 0 4.2 2.4"><polygon points="0,0 4.2,0 2.1,2.4" fill="#222"/></svg></div>
</div>
<div class="row" style="top:234.67px;background:#fdfdfd">
<div class="cb" style="left:3.7px;top:9.9px"></div>
<svg class="abs" style="left:18.3px;top:10.9px" width="8" height="6.4" viewBox="0 0 12 10"><path d="M0 0 L2.4 0 L2.4 4.2 L5.4 2.2 L5.4 4.2 L8.4 2.2 L8.4 4.2 L12 2.2 L12 10 L0 10Z" fill="#222"/></svg>
<svg class="abs" style="left:29px;top:11.5px" width="5.6" height="4.8" viewBox="0 0 5.6 4.8"><path d="M0.3 2.6L2 4.3L5.3 0.4" fill="none" stroke="#ababab" stroke-width="0.9"/></svg>
<svg class="abs" style="left:36.8px;top:10.7px" width="7.2" height="6.8" viewBox="0 0 7.2 6.8"><path d="M0.3 3.2h1.2v3.2H0.3zM2.3 6.2V3.2L4 0.5Q5 0.6 4.6 2.6H6.4Q7 2.8 6.8 3.6L6.2 5.8Q6 6.3 5.4 6.3Z" fill="none" stroke="#999" stroke-width="0.7"/></svg>
<div class="c" style="left:53.3px"><b>15:55</b> - Hjemme</div>
<div class="c" style="left:216.3px"><b>16:03</b> - Bakkane, 3728 Skien, Norge</div>
<div class="c" style="left:379.3px;letter-spacing:-0.26px">00:08:11</div>
<div class="c" style="left:413.5px">6.2 km</div>
<div class="c" style="left:447.3px;text-decoration:underline">0</div>
<div class="c" style="left:472px;letter-spacing:-0.28px">Skoda Enyaq (ED75934)</div>
<div class="c" style="left:635px;top:5.8px;text-decoration:underline;text-decoration-color:#8a8a8a;text-underline-offset:0.6px;letter-spacing:-0.12px;color:#444">Bård Andre Blom</div>
<div class="xb" style="left:742px;top:4px"><svg class="abs" style="left:3.2px;top:3.8px" width="3.6" height="3.6" viewBox="0 0 3.6 3.6"><path d="M0.3 0.3L3.3 3.3M3.3 0.3L0.3 3.3" stroke="#222" stroke-width="0.9"/></svg></div>
<div class="db" style="left:775.5px;top:6.1px;width:41.2px;border-radius:2px 0 0 2px"><svg class="abs" style="left:3.8px;top:2.9px" width="7" height="7" viewBox="0 0 7 7"><path d="M4 1H0.8Q0.4 1 0.4 1.4V6.2Q0.4 6.6 0.8 6.6H5.4Q5.8 6.6 5.8 6.2V3.4" fill="none" stroke="#333" stroke-width="0.8"/><path d="M2.6 3.4L5.6 0.4L6.6 1.4L3.6 4.4L2.4 4.7Z" fill="none" stroke="#333" stroke-width="0.7"/></svg><span style="position:absolute;left:13px;top:0">Detaljer</span></div>
<div class="db" style="left:815.9px;top:6.1px;width:13.2px;border-radius:0 2px 2px 0"><svg class="abs" style="left:3.8px;top:6.6px" width="4" height="2.3" viewBox="0 0 4.2 2.4"><polygon points="0,0 4.2,0 2.1,2.4" fill="#222"/></svg></div>
</div>
<div class="grp" style="top:262.39px"><svg class="abs" style="left:3.3px;top:5.5px" width="4.2" height="3.7" viewBox="0 0 4.2 3.7"><polygon points="0,0 4.2,0 2.1,3.7" fill="#222"/></svg><span style="position:absolute;left:13px;top:0">25.10.2023 Onsdag</span></div>
<div class="row" style="top:276.84px;background:#fdfdfd">
<div class="cb" style="left:3.7px;top:9.9px"></div>
<svg class="abs" style="left:18.3px;top:10.9px" width="8" height="6.4" viewBox="0 0 12 10"><path d="M0 0 L2.4 0 L2.4 4.2 L5.4 2.2 L5.4 4.2 L8.4 2.2 L8.4 4.2 L12 2.2 L12 10 L0 10Z" fill="#222"/></svg>
<svg class="abs" style="left:29px;top:11.5px" width="5.6" height="4.8" viewBox="0 0 5.6 4.8"><path d="M0.3 2.6L2 4.3L5.3 0.4" fill="none" stroke="#ababab" stroke-width="0.9"/></svg>
<svg class="abs" style="left:36.8px;top:10.7px" width="7.2" height="6.8" viewBox="0 0 7.2 6.8"><path d="M0.3 3.2h1.2v3.2H0.3zM2.3 6.2V3.2L4 0.5Q5 0.6 4.6 2.6H6.4Q7 2.8 6.8 3.6L6.2 5.8Q6 6.3 5.4 6.3Z" fill="none" stroke="#999" stroke-width="0.7"/></svg>
<div class="c" style="left:53.3px"><b>15:54</b> - Hjemme</div>
<div class="c" style="left:216.3px"><b>16:25</b> - Hjemme</div>
<div class="c" style="left:379.3px;letter-spacing:-0.26px">00:30:57</div>
<div class="c" style="left:413.5px">12.3 km</div>
<div class="c" style="left:447.3px;text-decoration:underline">0</div>
<div class="c" style="left:472px;letter-spacing:-0.28px">Skoda Enyaq (ED75934)</div>
<div class="c" style="left:635px;top:5.8px;text-decoration:underline;text-decoration-color:#8a8a8a;text-underline-offset:0.6px;letter-spacing:-0.12px;color:#444">Bård Andre Blom</div>
<div class="xb" style="left:742px;top:4px"><svg class="abs" style="left:3.2px;top:3.8px" width="3.6" height="3.6" viewBox="0 0 3.6 3.6"><path d="M0.3 0.3L3.3 3.3M3.3 0.3L0.3 3.3" stroke="#222" stroke-width="0.9"/></svg></div>
<div class="db" style="left:775.5px;top:6.1px;width:41.2px;border-radius:2px 0 0 2px"><svg class="abs" style="left:3.8px;top:2.9px" width="7" height="7" viewBox="0 0 7 7"><path d="M4 1H0.8Q0.4 1 0.4 1.4V6.2Q0.4 6.6 0.8 6.6H5.4Q5.8 6.6 5.8 6.2V3.4" fill="none" stroke="#333" stroke-width="0.8"/><path d="M2.6 3.4L5.6 0.4L6.6 1.4L3.6 4.4L2.4 4.7Z" fill="none" stroke="#333" stroke-width="0.7"/></svg><span style="position:absolute;left:13px;top:0">Detaljer</span></div>
<div class="db" style="left:815.9px;top:6.1px;width:13.2px;border-radius:0 2px 2px 0"><svg class="abs" style="left:3.8px;top:6.6px" width="4" height="2.3" viewBox="0 0 4.2 2.4"><polygon points="0,0 4.2,0 2.1,2.4" fill="#222"/></svg></div>
</div>
<div class="row" style="top:304.56px;background:#f5f5f5">
<div class="cb" style="left:3.7px;top:9.9px"></div>
<svg class="abs" style="left:18.3px;top:10.9px" width="8" height="6.4" viewBox="0 0 12 10"><path d="M0 0 L2.4 0 L2.4 4.2 L5.4 2.2 L5.4 4.2 L8.4 2.2 L8.4 4.2 L12 2.2 L12 10 L0 10Z" fill="#222"/></svg>
<svg class="abs" style="left:29px;top:11.5px" width="5.6" height="4.8" viewBox="0 0 5.6 4.8"><path d="M0.3 2.6L2 4.3L5.3 0.4" fill="none" stroke="#ababab" stroke-width="0.9"/></svg>
<svg class="abs" style="left:36.8px;top:10.7px" width="7.2" height="6.8" viewBox="0 0 7.2 6.8"><path d="M0.3 3.2h1.2v3.2H0.3zM2.3 6.2V3.2L4 0.5Q5 0.6 4.6 2.6H6.4Q7 2.8 6.8 3.6L6.2 5.8Q6 6.3 5.4 6.3Z" fill="none" stroke="#999" stroke-width="0.7"/></svg>
<div class="c" style="left:53.3px"><b>07:31</b> - Hjemme</div>
<div class="c" style="left:216.3px"><b>07:55</b> - Hjemme</div>
<div class="c" style="left:379.3px;letter-spacing:-0.26px">00:23:44</div>
<div class="c" style="left:413.5px">12.4 km</div>
<div class="c" style="left:447.3px;text-decoration:underline">0</div>
<div class="c" style="left:472px;letter-spacing:-0.28px">Skoda Enyaq (ED75934)</div>
<div class="c" style="left:635px;top:5.8px;text-decoration:underline;text-decoration-color:#8a8a8a;text-underline-offset:0.6px;letter-spacing:-0.12px;color:#444">Bård Andre Blom</div>
<div class="xb" style="left:742px;top:4px"><svg class="abs" style="left:3.2px;top:3.8px" width="3.6" height="3.6" viewBox="0 0 3.6 3.6"><path d="M0.3 0.3L3.3 3.3M3.3 0.3L0.3 3.3" stroke="#222" stroke-width="0.9"/></svg></div>
<div class="db" style="left:775.5px;top:6.1px;width:41.2px;border-radius:2px 0 0 2px"><svg class="abs" style="left:3.8px;top:2.9px" width="7" height="7" viewBox="0 0 7 7"><path d="M4 1H0.8Q0.4 1 0.4 1.4V6.2Q0.4 6.6 0.8 6.6H5.4Q5.8 6.6 5.8 6.2V3.4" fill="none" stroke="#333" stroke-width="0.8"/><path d="M2.6 3.4L5.6 0.4L6.6 1.4L3.6 4.4L2.4 4.7Z" fill="none" stroke="#333" stroke-width="0.7"/></svg><span style="position:absolute;left:13px;top:0">Detaljer</span></div>
<div class="db" style="left:815.9px;top:6.1px;width:13.2px;border-radius:0 2px 2px 0"><svg class="abs" style="left:3.8px;top:6.6px" width="4" height="2.3" viewBox="0 0 4.2 2.4"><polygon points="0,0 4.2,0 2.1,2.4" fill="#222"/></svg></div>
</div>
<div class="abs" style="left:847px;top:25px;width:9px;height:307px;background:#f3f3f3"></div>
<div class="abs" style="left:849.2px;top:33px;width:5.9px;height:203px;background:#b9b9b9"></div>
<svg class="abs" style="left:849.8px;top:27.2px" width="3.4" height="2.4" viewBox="0 0 3.4 2.4"><polygon points="0,2.4 3.4,2.4 1.7,0" fill="#9a9a9a"/></svg>
<svg class="abs" style="left:849.8px;top:327.8px" width="3.4" height="2.4" viewBox="0 0 3.4 2.4"><polygon points="0,0 3.4,0 1.7,2.4" fill="#444"/></svg>
<div class="abs" style="left:3.5px;top:339.4px;width:73.75px;height:14.8px;background:#f0f3f2"></div>
<div class="abs" style="left:33.0px;top:339.4px;width:14.75px;height:14.8px;background:#1c1f26;color:#fff;font-size:7px;font-weight:bold;line-height:15.6px;text-align:center">1</div>
<i class="abs" style="left:8.9px;top:345.3px;width:1px;height:4.4px;background:#6a6a6a"></i><i class="abs" style="left:9.8px;top:345.3px;width:0;height:0;border-top:2.2px solid transparent;border-bottom:2.2px solid transparent;border-right:3.2px solid #5f5f5f"></i>
<i class="abs" style="left:23.85px;top:345.3px;width:0;height:0;border-top:2.2px solid transparent;border-bottom:2.2px solid transparent;border-right:3.2px solid #5f5f5f"></i>
<i class="abs" style="left:53.55px;top:345.3px;width:0;height:0;border-top:2.2px solid transparent;border-bottom:2.2px solid transparent;border-left:3.2px solid #5f5f5f"></i>
<i class="abs" style="left:67.3px;top:345.3px;width:0;height:0;border-top:2.2px solid transparent;border-bottom:2.2px solid transparent;border-left:3.2px solid #5f5f5f"></i><i class="abs" style="left:70.4px;top:345.3px;width:1px;height:4.4px;background:#6a6a6a"></i>
<div class="abs" style="left:84.7px;top:340.3px;width:36.2px;height:13.1px;background:#fff;font-size:7px;line-height:14px;padding-left:11px;letter-spacing:-0.2px;color:#444">20<svg class="abs" style="left:27.2px;top:4.9px" width="4.2" height="3.4" viewBox="0 0 4.2 3.4"><polygon points="0,0 4.2,0 2.1,3.4" fill="#222"/></svg></div>
<div class="th" style="left:124.6px;top:342.6px;letter-spacing:-0.1px">poster per side</div>
<div class="th" style="left:789px;top:342.6px;letter-spacing:-0.146px">1 - 13 av 13 poster</div>
</div>
</body></html>
